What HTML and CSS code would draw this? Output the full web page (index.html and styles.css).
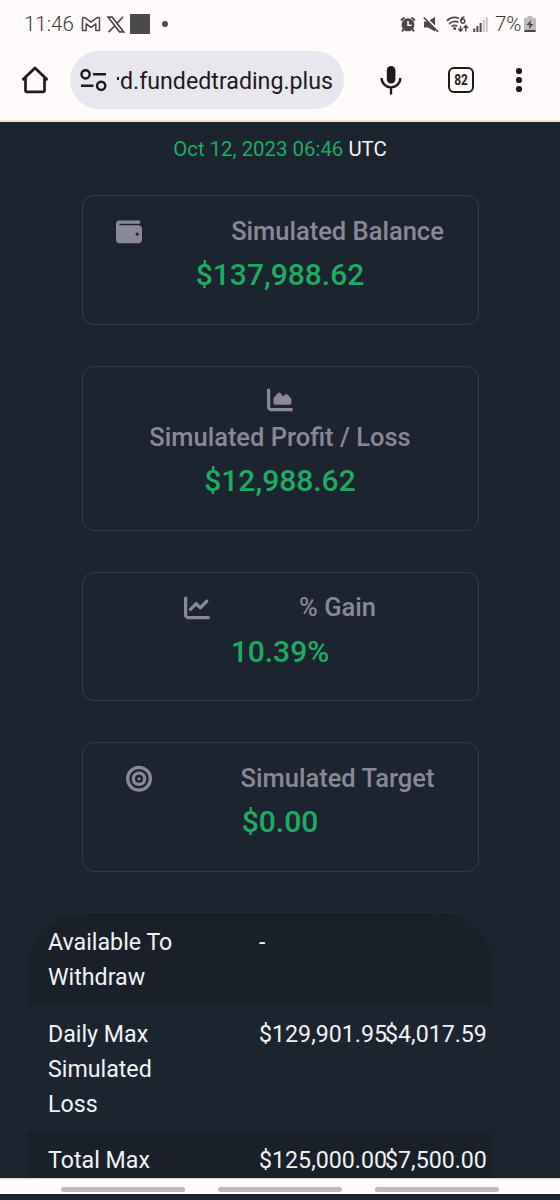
FILE: index.html
```html
<!DOCTYPE html>
<html lang="en">
<head>
<meta charset="utf-8">
<title>Trading dashboard</title>
<link rel="stylesheet" href="styles.css">
</head>
<body>
<div class="screen">
  <header class="chrome">
    <div class="status">
      <div class="status-left">
        <span class="clock">11:46</span>
        <svg class="gmail" width="20" height="16" viewBox="0 0 20 16"><path d="M1.500 14.500V3Q1.600.7 4 1.700L10 6.200 16 1.700Q18.400.7 18.500 3V14.500H14.800V7.800L10 11.400 5.200 7.800V14.500Z" fill="none" stroke="#4b4949" stroke-width="1.500" stroke-linejoin="round"/></svg>
        <svg class="xlogo" width="18" height="17" viewBox="0 0 18 17"><path d="M1.200 1.200H5.200L16.500 15.800H12.500ZM16 .8 10.200 7.300M7.600 10 1.500 16.200" fill="none" stroke="#4b4949" stroke-width="1.700"/></svg>
        <span class="square"></span>
        <span class="dot"></span>
      </div>
      <div class="status-right">
        <svg width="16" height="17" viewBox="0 0 16 17"><path d="M1 4.500 4.500 1.500M15 4.500 11.500 1.500M3.500 13 2 15.500M12.500 13 14 15.500" stroke="#4b4949" stroke-width="1.800"/><circle cx="8" cy="8.800" r="6.500" fill="#4b4949"/><path d="M8 5V9.300H11.500" fill="none" stroke="#fffbfa" stroke-width="1.500"/></svg>
        <svg width="16" height="17" viewBox="0 0 16 17"><path d="M1 5.500H5L12 .8V15.500L5 11.500H1Z" fill="#4b4949"/><path d="M1.500.5 16 15" stroke="#fffbfa" stroke-width="2"/><path d="M.8 1.500 15 15.800" stroke="#4b4949" stroke-width="1.700"/></svg>
        <svg class="wifi" width="23" height="17" viewBox="0 0 23 17"><path d="M.8 4.800Q6.500-.5 13 2.500M3 7.800Q7.500 4 12.500 6M5.500 10.600Q8.500 8.500 11.200 10" fill="none" stroke="#4b4949" stroke-width="1.700"/><circle cx="8.700" cy="12.600" r="1.500" fill="#4b4949"/><path d="M18.500.9Q14.700 1.500 14.900 5.200M14.500 10V15M12.300 12.800 14.500 15.200 16.700 12.800M19.800 15.500V10M17.600 12 19.800 9.600 22 12" fill="none" stroke="#4b4949" stroke-width="1.500"/><circle cx="16.900" cy="5.200" r="2" fill="none" stroke="#4b4949" stroke-width="1.400"/></svg>
        <svg width="15" height="15" viewBox="0 0 15 15"><path d="M1.200 11.500V15M4.400 9V15M7.600 6V15" stroke="#4b4949" stroke-width="2"/><path d="M10.700 3V15M13.700 0V15" stroke="#c9c5c4" stroke-width="2"/></svg>
        <span class="percent">7%</span>
        <svg class="battery" width="12" height="17" viewBox="0 0 12 17"><path d="M3.500 0H8.500V2H11Q12 2 12 3V16H0V3Q0 2 1 2H3.500Z" fill="#bfbbba"/><path d="M.5 14H11.500V15.500Q11.500 16 11 16H1Q.5 16 .5 15.500Z" fill="#4b4949"/><path d="M7 4 2.500 9H5.500L5 13 9.500 8H6.500Z" fill="#4b4949"/></svg>
      </div>
    </div>
    <div class="toolbar">
      <svg class="home" width="28" height="28" viewBox="0 0 28 28"><path d="M1.500 14 14 2 26.500 14M4.500 11V24.500Q4.500 25.800 5.800 25.800H22.200Q23.500 25.800 23.500 24.500V11" fill="none" stroke="#1f1a1a" stroke-width="2.700" stroke-linejoin="round"/></svg>
      <div class="address">
        <svg width="27" height="23" viewBox="0 0 27 23"><g fill="none" stroke="#1f1a1a" stroke-width="2.500"><circle cx="5.600" cy="5.300" r="4.100"/><circle cx="21.200" cy="16.800" r="4.100"/><path d="M13 5.300H26M1 16.800H13.500"/></g></svg>
        <span class="cut"></span><span class="url">d.fundedtrading.plus</span>
      </div>
      <svg class="mic" width="22" height="30" viewBox="0 0 22 30"><rect x="6.800" y="1" width="8.600" height="17.500" rx="4.300" fill="#1f1a1a"/><path d="M1.600 13A9.400 9.400 0 0 0 20.400 13M11 22V29.500" fill="none" stroke="#1f1a1a" stroke-width="2.400"/></svg>
      <div class="tabs"><span class="count">82</span></div>
      <svg class="more" width="8" height="26" viewBox="0 0 8 26"><g fill="#1f1a1a"><circle cx="4" cy="4" r="3.100"/><circle cx="4" cy="13" r="3.100"/><circle cx="4" cy="22" r="3.100"/></g></svg>
    </div>
  </header>

  <main class="page">
    <p class="date"><span class="stamp">Oct 12, 2023 06:46</span> UTC</p>
    <section class="cards">
      <article class="card">
        <div class="title">
          <svg class="icon" viewBox="0 0 512 512"><path d="M64 32C28.700 32 0 60.700 0 96V416c0 35.300 28.700 64 64 64H448c35.300 0 64-28.700 64-64V192c0-35.300-28.700-64-64-64H80c-8.800 0-16-7.200-16-16s7.200-16 16-16H448c17.700 0 32-14.300 32-32s-14.300-32-32-32H64zM416 272a32 32 0 1 1 0 64 32 32 0 1 1 0-64z"/></svg>
          <span class="label">Simulated Balance</span>
        </div>
        <div class="value">$137,988.62</div>
      </article>
      <article class="card">
        <div class="title">
          <svg class="icon stacked" viewBox="0 0 512 512"><path d="M64 64c0-17.700-14.300-32-32-32S0 46.300 0 64V400c0 44.200 35.800 80 80 80H480c17.700 0 32-14.300 32-32s-14.300-32-32-32H80c-8.800 0-16-7.200-16-16V64zm96 288H448c17.700 0 32-14.300 32-32V251.800c0-7.600-2.700-15-7.700-20.800l-65.800-76.800c-12.100-14.200-33.700-15-46.900-1.800l-21 21c-10 10-26.400 9.200-35.400-1.600l-39.200-47c-12.600-15.100-35.700-15.400-48.700-.6L135.900 215c-5.100 5.800-7.900 13.300-7.900 21.100v84c0 17.700 14.300 32 32 32z"/></svg>
          <span class="label">Simulated Profit / Loss</span>
        </div>
        <div class="value">$12,988.62</div>
      </article>
      <article class="card">
        <div class="title">
          <svg class="icon" viewBox="0 0 512 512"><path d="M64 64c0-17.700-14.300-32-32-32S0 46.300 0 64V400c0 44.200 35.800 80 80 80H480c17.700 0 32-14.300 32-32s-14.300-32-32-32H80c-8.800 0-16-7.200-16-16V64zm406.600 86.600c12.500-12.500 12.500-32.800 0-45.300s-32.800-12.500-45.300 0L320 210.700l-57.400-57.400c-12.500-12.500-32.800-12.500-45.300 0l-112 112c-12.500 12.500-12.500 32.800 0 45.300s32.800 12.500 45.300 0L240 221.300l57.400 57.400c12.500 12.500 32.800 12.500 45.300 0l128-128z"/></svg>
          <span class="label">% Gain</span>
        </div>
        <div class="value">10.39%</div>
      </article>
      <article class="card">
        <div class="title">
          <svg class="icon" viewBox="0 0 512 512"><g fill="none" stroke="#8a8898" stroke-width="64"><circle cx="256" cy="256" r="224"/><circle cx="256" cy="256" r="112"/></g><circle cx="256" cy="256" r="32"/></svg>
          <span class="label">Simulated Target</span>
        </div>
        <div class="value">$0.00</div>
      </article>
    </section>

    <section class="panel">
      <div class="table">
        <div class="row dark"><span class="name">Available To Withdraw</span><span>-</span><span></span></div>
        <div class="row"><span class="name">Daily Max Simulated Loss</span><span>$129,901.95</span><span>$4,017.59</span></div>
        <div class="row dark"><span class="name">Total Max</span><span>$125,000.00</span><span>$7,500.00</span></div>
      </div>
    </section>
  </main>

  <footer class="nav"><span class="handle"></span><span class="handle"></span><span class="handle"></span></footer>
</div>
</body>
</html>
```
FILE: styles.css
```css
* { box-sizing: border-box; }
body { margin: 0; background: #1c2430; font-family: Roboto, "Liberation Sans", sans-serif; }
svg { display: block; flex: none; }
.screen { width: 560px; height: 1200px; display: flex; flex-direction: column; overflow: hidden; background: #1c2430; }

.chrome { flex: none; height: 122px; background: #fffbfa; border-bottom: 2px solid #f3e4e1; }
.status { height: 48px; display: flex; justify-content: space-between; padding: 0 24px 0 24px; color: #3a3838; }
.status-left, .status-right { display: flex; align-items: center; }
.clock, .percent { font-size: 20.500px; font-weight: 300; line-height: 48px; }
.clock { width: 50px; }
.gmail { margin-left: 7px; }
.xlogo { margin-left: 6px; }
.square { width: 20px; height: 20px; background: #4b4949; margin-left: 5px; }
.dot { width: 6px; height: 6px; border-radius: 50%; background: #4b4949; margin-left: 12px; }
.status-right { gap: 7px; }
.wifi { margin-right: -3px; }
.percent { width: 25px; }
.battery { margin-left: -3px; }

.toolbar { height: 64px; display: flex; align-items: center; padding: 0 37px 0 21px; }
.address { width: 274px; height: 58px; margin-left: 21px; border-radius: 29px; background: #e9e7ee; display: flex; align-items: center; padding-left: 10px; }
.cut { width: 2px; height: 3px; margin: 0 1px 4px 10px; background: #1f1a1a; }
.url { padding-top: 3px; font-size: 23.200px; line-height: 55px; color: #1f1a1a; white-space: nowrap; }
.mic { margin-left: 36px; }
.tabs { width: 26px; height: 26px; margin-left: 46px; border: 2.500px solid #1f1a1a; border-radius: 6px; display: flex; justify-content: center; }
.count { font-size: 14px; font-weight: 700; line-height: 22px; color: #1f1a1a; transform: scaleX(.85); }
.more { margin-left: auto; }

.page { flex: none; height: 1056px; overflow: hidden; }
.date { margin: 12px 0 31px; font-size: 20.400px; line-height: 30px; text-align: center; color: #f4f4f6; }
.stamp { color: #1cac64; }
.cards { display: flex; flex-direction: column; gap: 41px; margin: 0 81.500px; }
.card { border: 1px solid #38393f; border-radius: 12px; padding: 17.500px 14px 27.500px; }
.title { display: flex; flex-wrap: wrap; justify-content: center; column-gap: 89px; }
.icon { width: 26px; height: 35.500px; fill: #8a8898; }
.stacked { margin: -2px 0 2px; }
.label { font-size: 25.500px; font-weight: 500; line-height: 35.500px; color: #8a8898; }
.value { margin-top: 4px; font-size: 30px; font-weight: 500; line-height: 43px; text-align: center; color: #1cac64; }

.panel { width: 508px; height: 330px; margin: 40.500px 0 0 26px; border: 1px solid #222833; border-radius: 56px 56px 0 0; }
.table { width: 466px; height: 330px; border-right: 1px solid #1a212c; border-radius: 55px 55px 0 0; overflow: hidden; font-size: 23.200px; line-height: 35px; color: #f1f2f5; }
.row { display: grid; grid-template-columns: 211px 126px 100px; padding: 11px 0 10.500px 21px; }
.row:first-child { padding-top: 12px; }
.name { max-width: 130px; }
.dark { background: #19202a; }

.nav { flex: none; height: 16px; margin-bottom: 6px; display: flex; gap: 33px; padding: 8px 0 0 61px; background: #fffbfa; border-top: 1px solid #e8cfc4; }
.handle { width: 124px; height: 5px; border-radius: 3px; background: #bdb9b8; }
```
